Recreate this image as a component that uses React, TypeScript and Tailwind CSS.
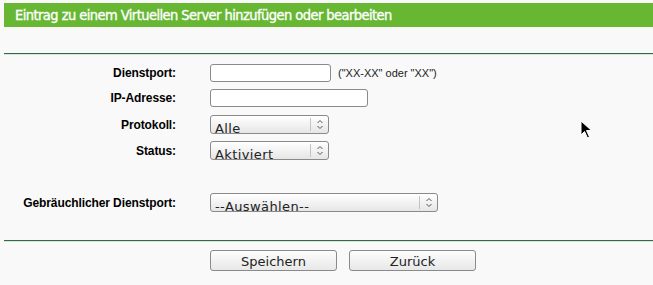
import { ReactNode } from 'react';

const labelFont = "font-['Liberation_Sans',Arial,sans-serif]";
const titleFont = "font-['DejaVu_Sans_Condensed','DejaVu_Sans',sans-serif]";
const widgetFont = "font-['DejaVu_Sans',sans-serif]";

function Row({ label, children, className = '' }: { label: string; children: ReactNode; className?: string }) {
  return (
    <div className={`flex items-center ${className}`}>
      <div className={`w-[173px] pr-[1px] text-right text-[12px] font-bold tracking-[-0.1px] text-black ${labelFont}`}>
        {label}
      </div>
      <div className="ml-[33px] flex items-center">{children}</div>
    </div>
  );
}

function TextBox({ width }: { width: string }) {
  return <div className={`h-[18px] ${width} rounded-[3px] border border-[#8a8a8a] bg-white`} />;
}

function Chevrons() {
  return (
    <svg width="8" height="11" viewBox="0 0 8 11" fill="none" stroke="#555" strokeWidth="1">
      <path d="M1.5 4 L4 1.5 L6.5 4" />
      <path d="M1.5 7 L4 9.5 L6.5 7" />
    </svg>
  );
}

function SelectBox({ width, value }: { width: string; value: string }) {
  return (
    <div
      className={`flex h-[19px] ${width} overflow-hidden rounded-[3px] border border-[#8a8a8a] bg-gradient-to-b from-white to-[#e6e6e6]`}
    >
      <div className={`flex-1 overflow-hidden pl-[4px] pt-[5px] text-[13px] leading-[16px] tracking-[0.4px] text-[#222] ${widgetFont}`}>
        {value}
      </div>
      <div className="my-[2px] w-px bg-[#c4c4c4]" />
      <div className="flex w-[17px] items-center justify-center">
        <Chevrons />
      </div>
    </div>
  );
}

function Button({ text }: { text: string }) {
  return (
    <div
      className={`flex h-[21px] w-[127px] items-center justify-center rounded-[3px] border border-[#8a8a8a] bg-gradient-to-b from-[#fdfdfd] to-[#e8e8e8] pt-[2px] text-[13px] text-[#222] ${widgetFont}`}
    >
      {text}
    </div>
  );
}

export default function App() {
  return (
    <div className="relative h-[285px] w-[653px] overflow-hidden bg-[#f9f9f9] pl-[4px] pt-[3px]">
      <div className="flex h-[24px] items-center bg-[#67b733] pl-[11px] pt-[1px]">
        <h1 className={`text-[14.5px] font-normal tracking-[-0.55px] text-white [font-stretch:condensed] [-webkit-text-stroke:0.35px_white] ${titleFont}`}>
          Eintrag zu einem Virtuellen Server hinzufügen oder bearbeiten
        </h1>
      </div>

      <div className="mt-[26px] h-[2px] border-b border-[#d8e6da] bg-[#2f6b45]" />

      <div className="mt-[9px] flex flex-col">
        <Row label="Dienstport:">
          <TextBox width="w-[121px]" />
          <span className={`ml-[7px] text-[11px] text-[#222] ${labelFont}`}>("XX-XX" oder "XX")</span>
        </Row>
        <Row label="IP-Adresse:" className="mt-[7px]">
          <TextBox width="w-[158px]" />
        </Row>
        <Row label="Protokoll:" className="mt-[8px]">
          <SelectBox width="w-[119px]" value="Alle" />
        </Row>
        <Row label="Status:" className="mt-[7px]">
          <SelectBox width="w-[119px]" value="Aktiviert" />
        </Row>
        <Row label="Gebräuchlicher Dienstport:" className="mt-[33px]">
          <SelectBox width="w-[228px]" value="--Auswählen--" />
        </Row>
      </div>

      <div className="mt-[28px] h-[2px] border-b border-[#d8e6da] bg-[#2f6b45]" />

      <div className="mt-[8px] flex gap-[12px] pl-[206px]">
        <Button text="Speichern" />
        <Button text="Zurück" />
      </div>

      <svg className="absolute left-[580px] top-[120px]" width="14" height="20" viewBox="0 0 14 20">
        <path d="M1 1 L1 15 L4.5 11.5 L7.5 18 L9.5 17 L6.5 10.5 L11.5 10.5 Z" fill="#000" stroke="#fff" strokeWidth="1" />
      </svg>
    </div>
  );
}
